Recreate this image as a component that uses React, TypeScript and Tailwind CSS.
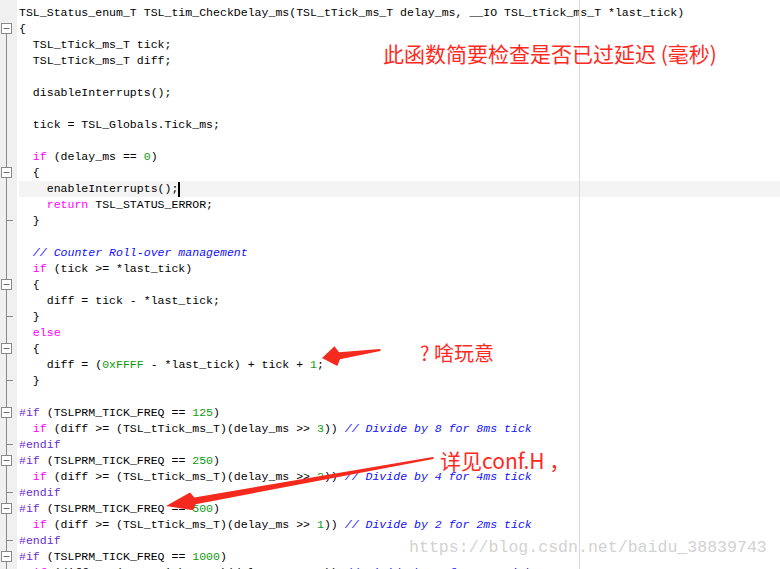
type Kind = "n" | "k" | "d" | "c" | "p";
type Tok = [string, Kind];
type Fold = "none" | "box" | "line" | "end";

interface Line {
  fold: Fold;
  toks: Tok[];
  active?: boolean;
}

const tokColor: Record<Kind, string> = {
  n: "text-black",
  k: "text-[#ff00ff]",
  d: "text-[#109a10]",
  c: "text-[#1010ff] italic",
  p: "text-[#6a2bd0]",
};

const ifLine = (shift: string, freq: string): Tok[] => [
  ["  ", "n"],
  ["if", "k"],
  [" (diff >= (TSL_tTick_ms_T)(delay_ms >> ", "n"],
  [shift, "d"],
  [")) ", "n"],
  [`// Divide by ${freq} for ${freq}ms tick`, "c"],
];

const lines: Line[] = [
  { fold: "none", toks: [["TSL_Status_enum_T TSL_tim_CheckDelay_ms(TSL_tTick_ms_T delay_ms, __IO TSL_tTick_ms_T *last_tick)", "n"]] },
  { fold: "box", toks: [["{", "n"]] },
  { fold: "line", toks: [["  TSL_tTick_ms_T tick;", "n"]] },
  { fold: "line", toks: [["  TSL_tTick_ms_T diff;", "n"]] },
  { fold: "line", toks: [] },
  { fold: "line", toks: [["  disableInterrupts();", "n"]] },
  { fold: "line", toks: [] },
  { fold: "line", toks: [["  tick = TSL_Globals.Tick_ms;", "n"]] },
  { fold: "line", toks: [] },
  { fold: "line", toks: [["  ", "n"], ["if", "k"], [" (delay_ms == ", "n"], ["0", "d"], [")", "n"]] },
  { fold: "box", toks: [["  {", "n"]] },
  { fold: "line", toks: [["    enableInterrupts();", "n"]], active: true },
  { fold: "line", toks: [["    ", "n"], ["return", "k"], [" TSL_STATUS_ERROR;", "n"]] },
  { fold: "end", toks: [["  }", "n"]] },
  { fold: "line", toks: [] },
  { fold: "line", toks: [["  ", "n"], ["// Counter Roll-over management", "c"]] },
  { fold: "line", toks: [["  ", "n"], ["if", "k"], [" (tick >= *last_tick)", "n"]] },
  { fold: "box", toks: [["  {", "n"]] },
  { fold: "line", toks: [["    diff = tick - *last_tick;", "n"]] },
  { fold: "end", toks: [["  }", "n"]] },
  { fold: "line", toks: [["  ", "n"], ["else", "k"]] },
  { fold: "box", toks: [["  {", "n"]] },
  { fold: "line", toks: [["    diff = (", "n"], ["0xFFFF", "d"], [" - *last_tick) + tick + ", "n"], ["1", "d"], [";", "n"]] },
  { fold: "end", toks: [["  }", "n"]] },
  { fold: "line", toks: [] },
  { fold: "box", toks: [["#if", "p"], [" (TSLPRM_TICK_FREQ == ", "n"], ["125", "d"], [")", "n"]] },
  { fold: "line", toks: ifLine("3", "8") },
  { fold: "end", toks: [["#endif", "p"]] },
  { fold: "box", toks: [["#if", "p"], [" (TSLPRM_TICK_FREQ == ", "n"], ["250", "d"], [")", "n"]] },
  { fold: "line", toks: ifLine("2", "4") },
  { fold: "end", toks: [["#endif", "p"]] },
  { fold: "box", toks: [["#if", "p"], [" (TSLPRM_TICK_FREQ == ", "n"], ["500", "d"], [")", "n"]] },
  { fold: "line", toks: ifLine("1", "2") },
  { fold: "end", toks: [["#endif", "p"]] },
  { fold: "box", toks: [["#if", "p"], [" (TSLPRM_TICK_FREQ == ", "n"], ["1000", "d"], [")", "n"]] },
  { fold: "line", toks: ifLine("0", "1") },
];

function FoldMark({ fold, first }: { fold: Fold; first: boolean }) {
  return (
    <svg width="17" height="16" className="block">
      {fold === "box" && (
        <>
          {!first && <line x1="6.5" y1="0" x2="6.5" y2="3" stroke="#8a8a8a" />}
          <rect x="1.5" y="3.5" width="10" height="10" fill="#fff" stroke="#8a8a8a" />
          <line x1="3.5" y1="8.5" x2="9.5" y2="8.5" stroke="#707070" />
          <line x1="6.5" y1="14" x2="6.5" y2="16" stroke="#8a8a8a" />
        </>
      )}
      {(fold === "line" || fold === "end") && <line x1="6.5" y1="0" x2="6.5" y2="16" stroke="#8a8a8a" />}
      {fold === "end" && <line x1="6.5" y1="8.5" x2="13" y2="8.5" stroke="#8a8a8a" />}
    </svg>
  );
}

export default function App() {
  return (
    <div className="relative w-[780px] h-[569px] overflow-hidden bg-white flex">
      {/* fold gutter */}
      <div className="w-[17px] shrink-0 bg-[#f0f0f0] pt-1">
        {lines.map((l, i) => (
          <FoldMark key={i} fold={l.fold} first={i === 1} />
        ))}
      </div>

      {/* code */}
      <div className="flex-1 pt-[5px] font-['Liberation_Mono',monospace] text-[11.55px] leading-4">
        {lines.map((l, i) => (
          <div key={i} className={`h-4 ml-[2px] whitespace-pre flex items-center ${l.active ? "bg-[#f4f4f4]" : ""}`}>
            {l.toks.map(([t, k], j) => (
              <span key={j} className={tokColor[k]}>
                {t}
              </span>
            ))}
            {l.active && <span className="inline-block w-[2px] h-[15px] bg-black" />}
          </div>
        ))}
      </div>

      {/* right margin guide */}
      <div className="absolute left-[579px] top-0 bottom-0 w-px bg-[#dadada]" />

      {/* annotations */}
      <div className="absolute left-[383px] top-[41px] text-[21px] leading-6 text-[#ff2a1f] font-['Noto_Sans_CJK_SC',sans-serif] whitespace-nowrap">
        此函数简要检查是否已过延迟 (毫秒)
      </div>
      <div className="absolute left-[420px] top-[341px] text-[20px] leading-6 text-[#ff2a1f] font-['Noto_Sans_CJK_SC',sans-serif] whitespace-pre">
        ? 啥玩意
      </div>
      <div className="absolute left-[440px] top-[448px] text-[21px] leading-6 text-[#ff2a1f] font-['Noto_Sans_CJK_SC',sans-serif] whitespace-pre">
        详见conf.H ，
      </div>

      <svg className="absolute inset-0 pointer-events-none" width="780" height="569">
        <polygon
          fill="#f52a1e"
          points="322,358 334.5,346.3 339,352.2 379.9,349 381,350 380.1,351 340,359.2 337.3,366.1"
        />
        <polygon
          fill="#f52a1e"
          points="166,506 190,492.5 194.4,497.4 432.8,457 434,458 433.2,459 195.6,504.2 193.2,510.3"
        />
      </svg>

      {/* watermark */}
      <div className="absolute left-[409px] top-[538px] text-[16.57px] leading-5 text-[#d2d2d2] font-['Liberation_Mono',monospace] whitespace-nowrap">
        https://blog.csdn.net/baidu_38839743
      </div>
    </div>
  );
}
